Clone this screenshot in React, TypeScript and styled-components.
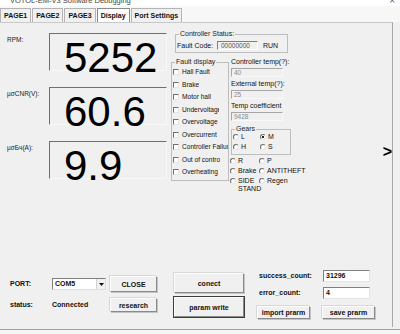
import React from "react";
import styled, { createGlobalStyle } from "styled-components";

const GlobalStyle = createGlobalStyle`
  html, body {
    margin: 0;
    padding: 0;
    background: #f0f0f0;
  }
  body {
    font-family: "Liberation Sans", Arial, sans-serif;
  }
`;

const Window = styled.div`
  width: 400px;
  height: 334px;
  overflow: hidden;
  display: flex;
  flex-direction: column;
  background: #f0f0f0;
  color: #111;
  font-family: "Liberation Sans", Arial, sans-serif;
  font-size: 7px;
  line-height: 8px;
`;

const TitleBar = styled.div`
  flex: none;
  height: 6px;
  overflow: hidden;
  background: #fff;
  display: flex;
  justify-content: space-between;
  align-items: flex-start;
  padding: 0 5px 0 10px;
  font-size: 7.5px;
  line-height: 1px;
  color: #444;
  > .close {
    font-size: 10px;
    color: #555;
  }
`;

const TabStrip = styled.div`
  flex: none;
  height: 16px;
  display: flex;
  align-items: flex-end;
  gap: 1px;
  background: #f7f7f7;
`;

const Tab = styled.div<{ $active?: boolean }>`
  height: 14px;
  box-sizing: border-box;
  padding: 0 3px;
  border: 1px solid ${(p) => (p.$active ? "#8a8a8a" : "#b4b4b4")};
  border-bottom: none;
  background: ${(p) => (p.$active ? "#fdfdfd" : "#f0f0f0")};
  font-weight: bold;
  font-size: 7px;
  line-height: 13px;
  color: #111;
  white-space: nowrap;
`;

const Panel = styled.div`
  flex: none;
  width: 393px;
  height: 305px;
  box-sizing: border-box;
  border-top: 1px solid #c9c9c9;
  border-right: 1px solid #a8a8a8;
  display: flex;
  flex-direction: column;
`;

const Footer = styled.div`
  flex: 1;
  margin-top: 2px;
  border-top: 1px solid #86a5cc;
  background: #f6f6f6;
`;

const Upper = styled.div`
  flex: none;
  height: 247px;
  display: flex;
  align-items: flex-start;
`;

/* ---------- meters ---------- */

const MeterColumn = styled.div`
  width: 170px;
  flex: none;
  padding-top: 10px;
  display: flex;
  flex-direction: column;
  gap: 16px;
`;

const MeterRow = styled.div`
  display: flex;
  align-items: flex-start;
`;

const MeterLabel = styled.div`
  width: 49px;
  box-sizing: border-box;
  padding: 3px 0 0 7px;
  flex: none;
  font-size: 6.5px;
  color: #222;
`;

const MeterBox = styled.div`
  width: 118px;
  height: 38px;
  box-sizing: border-box;
  border-style: solid;
  border-width: 1px;
  border-color: #707070 #f8f8f8 #f8f8f8 #707070;
  padding: 3px 0 0 14px;
  font-size: 42px;
  line-height: 42px;
  color: #000;
  white-space: nowrap;
`;

/* ---------- group boxes ---------- */

const Group = styled.fieldset<{ $w: number }>`
  width: ${(p) => p.$w}px;
  box-sizing: border-box;
  min-width: 0;
  margin: 0;
  padding: 0;
  border: 1px solid #bdbdbd;
`;

const Legend = styled.legend`
  margin-left: 3px;
  padding: 0 1px;
  font-size: 7px;
  line-height: 8px;
  height: 8px;
  color: #222;
`;

const MidColumn = styled.div`
  width: 121px;
  flex: none;
  padding-top: 7px;
  display: flex;
  flex-direction: column;
`;

const StatusWrap = styled.div`
  margin-left: 5px;
`;

const StatusLine = styled.div`
  display: flex;
  align-items: center;
  padding: 3px 0 2px 1px;
`;

const StatusLabel = styled.span`
  width: 40px;
  flex: none;
`;

const CodeField = styled.div`
  width: 41px;
  height: 9px;
  box-sizing: border-box;
  border-style: solid;
  border-width: 1px;
  border-color: #808080 #fff #fff #808080;
  padding-left: 3px;
  font-size: 6.5px;
  line-height: 7px;
  color: #555;
`;

const RunText = styled.span`
  margin-left: 5px;
`;

const LowerRow = styled.div`
  display: flex;
  align-items: flex-start;
  margin-top: 5px;
  margin-left: 1px;
`;

const CheckList = styled.div`
  padding-bottom: 1px;
`;

const CheckRow = styled.div`
  height: 12.5px;
  display: flex;
  align-items: center;
  padding-left: 1px;
`;

const Check = styled.span`
  width: 6px;
  height: 6px;
  flex: none;
  box-sizing: border-box;
  background: #fff;
  border-style: solid;
  border-width: 1px;
  border-color: #6f6f6f #e6e6e6 #e6e6e6 #6f6f6f;
`;

const CheckText = styled.span<{ $clip: number }>`
  margin-left: 3px;
  max-width: ${(p) => p.$clip}px;
  overflow: hidden;
  white-space: nowrap;
  font-size: 6.6px;
`;

/* ---------- right column ---------- */

const RightColumn = styled.div`
  width: 61px;
  flex: none;
  margin-left: 1px;
  display: flex;
  flex-direction: column;
`;

const Field = styled.div`
  display: flex;
  flex-direction: column;
  margin-bottom: 3px;
`;

const FieldLabel = styled.div`
  height: 8px;
  white-space: nowrap;
  padding-left: 1px;
`;

const DisabledInput = styled.div`
  margin: 2px 0 0 1px;
  width: 52px;
  height: 9px;
  box-sizing: border-box;
  border-style: solid;
  border-width: 1px;
  border-color: #a6a6a6 #f8f8f8 #f8f8f8 #a6a6a6;
  padding-left: 2px;
  font-size: 6.5px;
  line-height: 7px;
  color: #8c8c8c;
`;

const GearGroupWrap = styled.div`
  margin: 1px 0 0 1px;
`;

const RadioGrid = styled.div<{ $first: number }>`
  display: grid;
  grid-template-columns: ${(p) => p.$first}px auto;
  grid-auto-rows: 10px;
  padding: 0 0 1px 1px;
`;

const RadioItem = styled.div`
  display: flex;
  align-items: flex-start;
  padding-top: 1px;
`;

const Radio = styled.span<{ $on?: boolean }>`
  width: 6px;
  height: 6px;
  flex: none;
  box-sizing: border-box;
  border-radius: 50%;
  border-style: solid;
  border-width: 1px;
  border-color: #6f6f6f #e6e6e6 #e6e6e6 #6f6f6f;
  background: ${(p) =>
    p.$on ? "radial-gradient(circle, #222 0 1.1px, #fff 1.5px)" : "#fff"};
`;

const RadioText = styled.span<{ $wrap?: boolean }>`
  margin-left: 2px;
  line-height: 8px;
  margin-top: -1px;
  white-space: ${(p) => (p.$wrap ? "normal" : "nowrap")};
  width: ${(p) => (p.$wrap ? "20px" : "auto")};
`;

const LooseRadios = styled(RadioGrid)`
  margin-top: 2px;
  padding: 0;
`;

const Arrow = styled.div`
  margin: 121px 0 0 auto;
  font-size: 16px;
  line-height: 16px;
  font-weight: bold;
  color: #000;
`;

/* ---------- bottom ---------- */

const Bottom = styled.div`
  flex: 1;
  display: flex;
  align-items: flex-start;
  font-weight: bold;
  font-size: 7px;
`;

const PortGrid = styled.div`
  margin: 6px 0 0 10px;
  display: grid;
  grid-template-columns: 42px 58px 47px;
  grid-template-rows: 16px 14px;
  row-gap: 6px;
  align-items: center;
`;

const Button = styled.button<{ $w: number; $h: number; $default?: boolean }>`
  width: ${(p) => p.$w}px;
  height: ${(p) => p.$h}px;
  box-sizing: border-box;
  padding: 0;
  margin: 0;
  font-family: "Liberation Sans", Arial, sans-serif;
  font-size: 7px;
  font-weight: bold;
  color: #111;
  background: #f0f0f0;
  border-style: solid;
  border-width: 1px;
  border-color: #fdfdfd #8a8a8a #8a8a8a #fdfdfd;
  box-shadow: ${(p) =>
    p.$default ? "0 0 0 1px #3c3c3c" : "1px 1px 0 #c4c4c4, -1px -1px 0 #d8d8d8"};
`;

const Combo = styled.div`
  width: 54px;
  height: 12px;
  box-sizing: border-box;
  display: flex;
  background: #fff;
  border-style: solid;
  border-width: 1px;
  border-color: #808080 #e0e0e0 #e0e0e0 #808080;
  > .value {
    flex: 1;
    padding-left: 2px;
    line-height: 10px;
  }
  > .drop {
    width: 8px;
    flex: none;
    display: flex;
    align-items: center;
    justify-content: center;
    background: #f0f0f0;
    border-left: 1px solid #d0d0d0;
  }
`;

const ActionColumn = styled.div`
  margin: 3px 0 0 17px;
  display: flex;
  flex-direction: column;
  gap: 4px;
`;

const CountColumn = styled.div`
  margin-left: 13px;
  display: flex;
  flex-direction: column;
`;

const CountRow = styled.div<{ $gap: number }>`
  display: flex;
  align-items: center;
  margin-top: ${(p) => p.$gap}px;
`;

const CountLabel = styled.span`
  width: 66px;
  box-sizing: border-box;
  padding-left: 2px;
`;

const CountInput = styled.div`
  width: 47px;
  height: 12px;
  box-sizing: border-box;
  background: #fff;
  border-style: solid;
  border-width: 1px;
  border-color: #808080 #e4e4e4 #e4e4e4 #808080;
  padding-left: 2px;
  line-height: 10px;
`;

const ButtonRow = styled.div`
  display: flex;
  gap: 12px;
  margin-top: 7px;
`;

const meters = [
  { label: "RPM:", value: "5252" },
  { label: "µσCNR(V):", value: "60.6" },
  { label: "µσБч(A):", value: "9.9" },
];

const faults: [string, number][] = [
  ["Hall Fault", 44],
  ["Brake", 44],
  ["Motor hall", 44],
  ["Undervoltage", 37],
  ["Overvoltage", 44],
  ["Overcurrent", 44],
  ["Controller Failure", 56],
  ["Out of contro", 41],
  ["Overheating", 44],
];

const tabs = ["PAGE1", "PAGE2", "PAGE3", "Display", "Port Settings"];

const App: React.FC = () => {
  return (
    <>
      <GlobalStyle />
      <Window>
        <TitleBar>
          <span>VOTOL-EM-V3 Software Debugging</span>
          <span className="close">×</span>
        </TitleBar>
        <TabStrip>
          {tabs.map((t) => (
            <Tab key={t} $active={t === "Display"}>
              {t}
            </Tab>
          ))}
        </TabStrip>
        <Panel>
          <Upper>
            <MeterColumn>
              {meters.map((m) => (
                <MeterRow key={m.label}>
                  <MeterLabel>{m.label}</MeterLabel>
                  <MeterBox>{m.value}</MeterBox>
                </MeterRow>
              ))}
            </MeterColumn>

            <MidColumn>
              <StatusWrap>
                <Group $w={113}>
                  <Legend>Controller Status:</Legend>
                  <StatusLine>
                    <StatusLabel>Fault Code:</StatusLabel>
                    <CodeField>00000000</CodeField>
                    <RunText>RUN</RunText>
                  </StatusLine>
                </Group>
              </StatusWrap>
              <LowerRow>
                <Group $w={59}>
                  <Legend>Fault display</Legend>
                  <CheckList>
                    {faults.map(([name, clip]) => (
                      <CheckRow key={name}>
                        <Check />
                        <CheckText $clip={clip}>{name}</CheckText>
                      </CheckRow>
                    ))}
                  </CheckList>
                </Group>
                <RightColumn>
                  <Field>
                    <FieldLabel>Controller temp(?):</FieldLabel>
                    <DisabledInput>40</DisabledInput>
                  </Field>
                  <Field>
                    <FieldLabel>External temp(?):</FieldLabel>
                    <DisabledInput>25</DisabledInput>
                  </Field>
                  <Field>
                    <FieldLabel>Temp coefficient</FieldLabel>
                    <DisabledInput>9428</DisabledInput>
                  </Field>
                  <GearGroupWrap>
                    <Group $w={60}>
                      <Legend>Gears</Legend>
                      <RadioGrid $first={27}>
                        <RadioItem>
                          <Radio />
                          <RadioText>L</RadioText>
                        </RadioItem>
                        <RadioItem>
                          <Radio $on />
                          <RadioText>M</RadioText>
                        </RadioItem>
                        <RadioItem>
                          <Radio />
                          <RadioText>H</RadioText>
                        </RadioItem>
                        <RadioItem>
                          <Radio />
                          <RadioText>S</RadioText>
                        </RadioItem>
                      </RadioGrid>
                    </Group>
                  </GearGroupWrap>
                  <LooseRadios $first={29}>
                    <RadioItem>
                      <Radio />
                      <RadioText>R</RadioText>
                    </RadioItem>
                    <RadioItem>
                      <Radio />
                      <RadioText>P</RadioText>
                    </RadioItem>
                    <RadioItem>
                      <Radio />
                      <RadioText>Brake</RadioText>
                    </RadioItem>
                    <RadioItem>
                      <Radio />
                      <RadioText>ANTITHEFT</RadioText>
                    </RadioItem>
                    <RadioItem>
                      <Radio />
                      <RadioText $wrap>SIDE STAND</RadioText>
                    </RadioItem>
                    <RadioItem>
                      <Radio />
                      <RadioText>Regen</RadioText>
                    </RadioItem>
                  </LooseRadios>
                </RightColumn>
              </LowerRow>
            </MidColumn>

            <Arrow>&gt;</Arrow>
          </Upper>

          <Bottom>
            <PortGrid>
              <span>PORT:</span>
              <Combo>
                <span className="value">COM5</span>
                <span className="drop">
                  <svg width="5" height="3" viewBox="0 0 5 3">
                    <path d="M0 0h5L2.5 3z" fill="#111" />
                  </svg>
                </span>
              </Combo>
              <Button $w={47} $h={16}>
                CLOSE
              </Button>
              <span>status:</span>
              <span>Connected</span>
              <Button $w={47} $h={14}>
                research
              </Button>
            </PortGrid>

            <ActionColumn>
              <Button $w={70} $h={20}>
                conect
              </Button>
              <Button $w={70} $h={20} $default>
                param write
              </Button>
            </ActionColumn>

            <CountColumn>
              <CountRow $gap={0}>
                <CountLabel>success_count:</CountLabel>
                <CountInput>31296</CountInput>
              </CountRow>
              <CountRow $gap={5}>
                <CountLabel>error_count:</CountLabel>
                <CountInput>4</CountInput>
              </CountRow>
              <ButtonRow>
                <Button $w={53} $h={13}>
                  import prarm
                </Button>
                <Button $w={53} $h={13}>
                  save prarm
                </Button>
              </ButtonRow>
            </CountColumn>
          </Bottom>
        </Panel>
        <Footer />
      </Window>
    </>
  );
};

export default App;
